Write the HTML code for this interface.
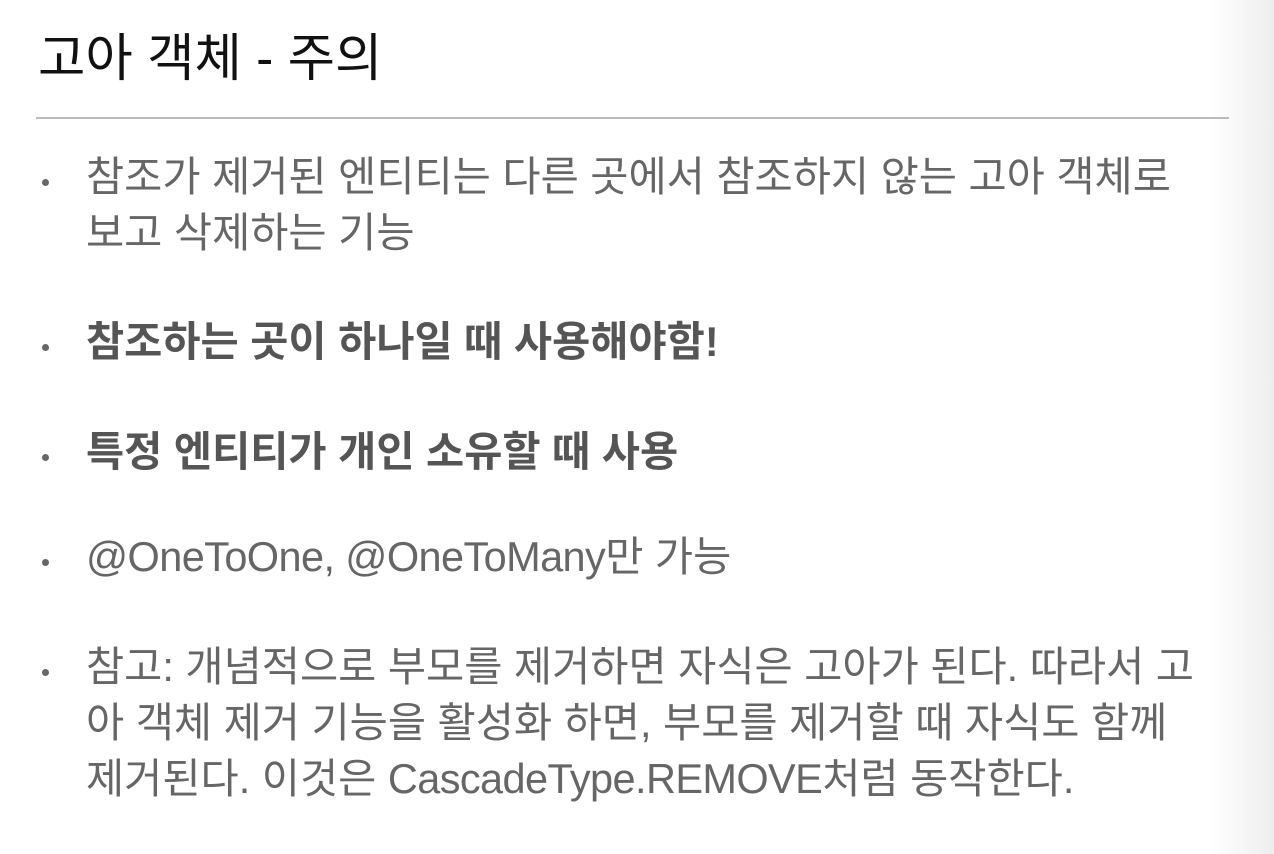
<!DOCTYPE html>
<html><head><meta charset="utf-8"><style>
html,body{margin:0;padding:0;width:1274px;height:854px;overflow:hidden;background:#fff;position:relative}
body{font-family:"Liberation Sans","Noto Sans CJK KR",sans-serif}
.strip{position:absolute;right:0;top:0;width:64px;height:854px;background:linear-gradient(to right,rgba(240,240,240,0),#eeeeee)}
.t{position:absolute;left:38px;top:26px;font-size:51.5px;line-height:64px;color:#111;white-space:nowrap}
.hr{position:absolute;left:36px;top:117px;width:1193px;height:2px;background:#bbb}
.l{position:absolute;left:86px;font-size:41.5px;line-height:56px;color:#666;white-space:nowrap}
.b{position:absolute;left:42px;width:7px;height:7px;border-radius:50%;background:#666}
.bold{font-weight:bold;color:#555}
.en{letter-spacing:-0.6px}
</style></head><body>
<div class="strip"></div>
<div class="t">고아 객체 - 주의</div>
<div class="hr"></div>

<div class="b" style="top:179px"></div>
<div class="l" style="top:149px">참조가 제거된 엔티티는 다른 곳에서 참조하지 않는 고아 객체로</div>
<div class="l" style="top:205px">보고 삭제하는 기능</div>

<div class="b" style="top:344px"></div>
<div class="l bold" style="top:314px">참조하는 곳이 하나일 때 사용해야함!</div>

<div class="b" style="top:454px"></div>
<div class="l bold" style="top:424px">특정 엔티티가 개인 소유할 때 사용</div>

<div class="b" style="top:559px"></div>
<div class="l" style="top:529px"><span class="en">@OneToOne, @OneToMany</span>만 가능</div>

<div class="b" style="top:669px"></div>
<div class="l" style="top:639px">참고: 개념적으로 부모를 제거하면 자식은 고아가 된다. 따라서 고</div>
<div class="l" style="top:695px">아 객체 제거 기능을 활성화 하면, 부모를 제거할 때 자식도 함께</div>
<div class="l" style="top:751px">제거된다. 이것은 <span class="en">CascadeType.REMOVE</span>처럼 동작한다.</div>
</body></html>
